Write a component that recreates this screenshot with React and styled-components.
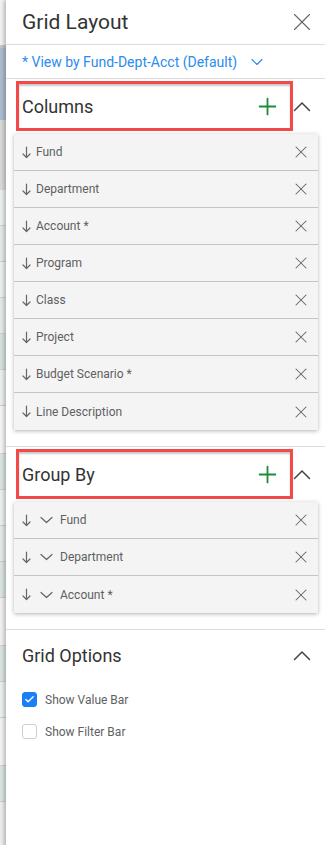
import React, { useState } from "react";
import styled, { createGlobalStyle } from "styled-components";
import { X, ChevronDown, Plus, Check } from "lucide-react";

const GlobalStyle = createGlobalStyle`
  html, body {
    margin: 0;
    padding: 0;
    background: #fff;
  }
  body {
    font-family: Roboto, "Noto Sans", Arial, sans-serif;
  }
  * {
    box-sizing: border-box;
  }
`;

const Page = styled.div`
  display: flex;
  width: 325px;
  min-height: 845px;
  overflow: hidden;
`;

const Backdrop = styled.div`
  width: 6px;
  flex-shrink: 0;
  display: flex;
  flex-direction: column;
  background: #d6d6d6;
`;

const Band = styled.div`
  height: ${(p) => p.h}px;
  background: ${(p) => p.bg};
  border-bottom: 1px solid ${(p) => p.line || "transparent"};
`;

const Panel = styled.div`
  flex: 1;
  min-width: 0;
  background: #fff;
  box-shadow: -2px 0 4px rgba(0, 0, 0, 0.25);
  display: flex;
  flex-direction: column;
`;

const Header = styled.div`
  height: 45px;
  display: flex;
  align-items: center;
  justify-content: space-between;
  padding: 0 8px 0 16px;
  border-bottom: 1px solid #dcdcdc;
`;

const Title = styled.div`
  font-size: 21px;
  color: #333;
  line-height: 1;
`;

const IconButton = styled.button`
  border: none;
  background: none;
  padding: 0;
  display: flex;
  align-items: center;
  justify-content: center;
  color: ${(p) => p.color || "#555"};
  cursor: pointer;
`;

const ViewRow = styled.div`
  height: 34px;
  display: flex;
  align-items: center;
  gap: 10px;
  padding-left: 16px;
  border-bottom: 1px solid #dcdcdc;
  color: #2a8cf0;
  font-size: 14px;
`;

const Section = styled.div`
  padding: 2px 0 ${(p) => p.bottom ?? 16}px;
  border-bottom: ${(p) => (p.last ? "none" : "1px solid #dcdcdc")};
`;

const SectionHeader = styled.div`
  display: flex;
  align-items: center;
  justify-content: space-between;
  padding: 0 14px 0 10px;
`;

const Highlight = styled.div`
  width: 277px;
  height: 50px;
  border: 3px solid #f24949;
  box-shadow: inset 0 2px 2px rgba(0, 0, 0, 0.22);
  display: flex;
  align-items: center;
  justify-content: space-between;
  padding: 0 9px 0 3px;
`;

const SectionTitle = styled.div`
  font-size: 18px;
  color: #333;
`;

const PlainHeader = styled.div`
  height: 47px;
  display: flex;
  align-items: center;
  justify-content: space-between;
  padding: 0 14px 0 16px;
`;

const List = styled.div`
  margin: 3px 7px 0 8px;
  background: #f4f4f4;
  box-shadow: 0 1px 4px rgba(0, 0, 0, 0.3);
`;

const Row = styled.div`
  height: 37px;
  display: flex;
  align-items: center;
  padding: 0 7px 0 8px;
  border-bottom: 1px solid #c4c4c4;
  color: #5f5f5f;
  font-size: 12px;

  &:last-child {
    border-bottom: none;
  }
`;

const RowIcon = styled.span`
  display: flex;
  align-items: center;
  color: #666;
  margin-right: ${(p) => p.gap ?? 0}px;
`;

const RowLabel = styled.span`
  flex: 1;
`;

const Options = styled.div`
  display: flex;
  flex-direction: column;
  gap: 17px;
  padding: 13px 16px 0 16px;
`;

const OptionLabel = styled.label`
  display: flex;
  align-items: center;
  gap: 8px;
  font-size: 12px;
  color: #5f5f5f;
  cursor: pointer;
`;

const Box = styled.span`
  width: 15px;
  height: 15px;
  border-radius: 3px;
  display: flex;
  align-items: center;
  justify-content: center;
  background: ${(p) => (p.checked ? "#1a7ef5" : "#fff")};
  border: 1px solid ${(p) => (p.checked ? "#1a7ef5" : "#cfcfcf")};
  color: #fff;
`;

const columns = [
  "Fund",
  "Department",
  "Account *",
  "Program",
  "Class",
  "Project",
  "Budget Scenario *",
  "Line Description",
];

const groups = ["Fund", "Department", "Account *"];

const bands = [
  { h: 45, bg: "#f3f3f3" },
  { h: 3, bg: "#c8c8c8" },
  { h: 72, bg: "#aebfcf" },
  { h: 70, bg: "#dadada" },
  { h: 36, bg: "#eef1f1", line: "#d0d0d0" },
  { h: 36, bg: "#e6eaea", line: "#d0d0d0" },
  { h: 36, bg: "#eef1f1", line: "#d0d0d0" },
  { h: 36, bg: "#e6eaea", line: "#d0d0d0" },
  { h: 36, bg: "#d9e1e1", line: "#d0d0d0" },
  { h: 36, bg: "#eef1f1", line: "#d0d0d0" },
  { h: 48, bg: "#f6f6f6", line: "#d0d0d0" },
  { h: 36, bg: "#dde5e5", line: "#d0d0d0" },
  { h: 36, bg: "#eef1f1", line: "#d0d0d0" },
  { h: 36, bg: "#e6eaea", line: "#d0d0d0" },
  { h: 36, bg: "#dde5e5", line: "#d0d0d0" },
  { h: 48, bg: "#f2f2f2", line: "#d0d0d0" },
  { h: 36, bg: "#dde5e5", line: "#d0d0d0" },
  { h: 36, bg: "#eef1f1", line: "#d0d0d0" },
  { h: 48, bg: "#f4f4f4", line: "#d0d0d0" },
  { h: 36, bg: "#dde5e5", line: "#d0d0d0" },
  { h: 48, bg: "#eeeeee", line: "#d0d0d0" },
  { h: 36, bg: "#dde5e5", line: "#d0d0d0" },
];

const Checkbox = ({ checked, onChange, children }) => (
  <OptionLabel onClick={onChange}>
    <Box checked={checked}>{checked && <Check size={11} strokeWidth={3} />}</Box>
    {children}
  </OptionLabel>
);

// thin caret used to collapse a section
const Collapse = () => (
  <IconButton color="#444">
    <svg width="18" height="11" viewBox="0 0 18 11" fill="none">
      <path
        d="M1.5 9.5 L9 2 L16.5 9.5"
        stroke="currentColor"
        strokeWidth="1.5"
        strokeLinecap="round"
        strokeLinejoin="round"
      />
    </svg>
  </IconButton>
);

const SortArrow = () => (
  <svg width="9" height="13" viewBox="0 0 9 13" fill="none">
    <path
      d="M4.5 1 V11.5 M1 8 L4.5 11.5 L8 8"
      stroke="currentColor"
      strokeWidth="1.2"
      strokeLinecap="round"
      strokeLinejoin="round"
    />
  </svg>
);

const Caret = () => (
  <svg width="13" height="8" viewBox="0 0 13 8" fill="none">
    <path
      d="M1 1.5 L6.5 6.5 L12 1.5"
      stroke="currentColor"
      strokeWidth="1.2"
      strokeLinecap="round"
      strokeLinejoin="round"
    />
  </svg>
);

const AddButton = () => (
  <IconButton color="#1e8a3a">
    <Plus size={27} strokeWidth={1.6} />
  </IconButton>
);

const RemoveButton = () => (
  <IconButton color="#666">
    <X size={20} strokeWidth={1.25} />
  </IconButton>
);

const App = () => {
  const [valueBar, setValueBar] = useState(true);
  const [filterBar, setFilterBar] = useState(false);

  return (
    <Page>
      <GlobalStyle />
      <Backdrop>
        {bands.map((b, i) => (
          <Band key={i} h={b.h} bg={b.bg} line={b.line} />
        ))}
      </Backdrop>
      <Panel>
        <Header>
          <Title>Grid Layout</Title>
          <IconButton color="#666">
            <X size={30} strokeWidth={0.9} />
          </IconButton>
        </Header>
        <ViewRow>
          * View by Fund-Dept-Acct (Default)
          <ChevronDown size={20} strokeWidth={1.4} />
        </ViewRow>

        <Section>
          <SectionHeader>
            <Highlight>
              <SectionTitle>Columns</SectionTitle>
              <AddButton />
            </Highlight>
            <Collapse />
          </SectionHeader>
          <List>
            {columns.map((c) => (
              <Row key={c}>
                <RowIcon gap={5}>
                  <SortArrow />
                </RowIcon>
                <RowLabel>{c}</RowLabel>
                <RemoveButton />
              </Row>
            ))}
          </List>
        </Section>

        <Section>
          <SectionHeader>
            <Highlight>
              <SectionTitle>Group By</SectionTitle>
              <AddButton />
            </Highlight>
            <Collapse />
          </SectionHeader>
          <List>
            {groups.map((g) => (
              <Row key={g}>
                <RowIcon gap={9}>
                  <SortArrow />
                </RowIcon>
                <RowIcon gap={7}>
                  <Caret />
                </RowIcon>
                <RowLabel>{g}</RowLabel>
                <RemoveButton />
              </Row>
            ))}
          </List>
        </Section>

        <Section last bottom={0}>
          <PlainHeader>
            <SectionTitle>Grid Options</SectionTitle>
            <Collapse />
          </PlainHeader>
          <Options>
            <Checkbox checked={valueBar} onChange={() => setValueBar(!valueBar)}>
              Show Value Bar
            </Checkbox>
            <Checkbox checked={filterBar} onChange={() => setFilterBar(!filterBar)}>
              Show Filter Bar
            </Checkbox>
          </Options>
        </Section>
      </Panel>
    </Page>
  );
};

export default App;
